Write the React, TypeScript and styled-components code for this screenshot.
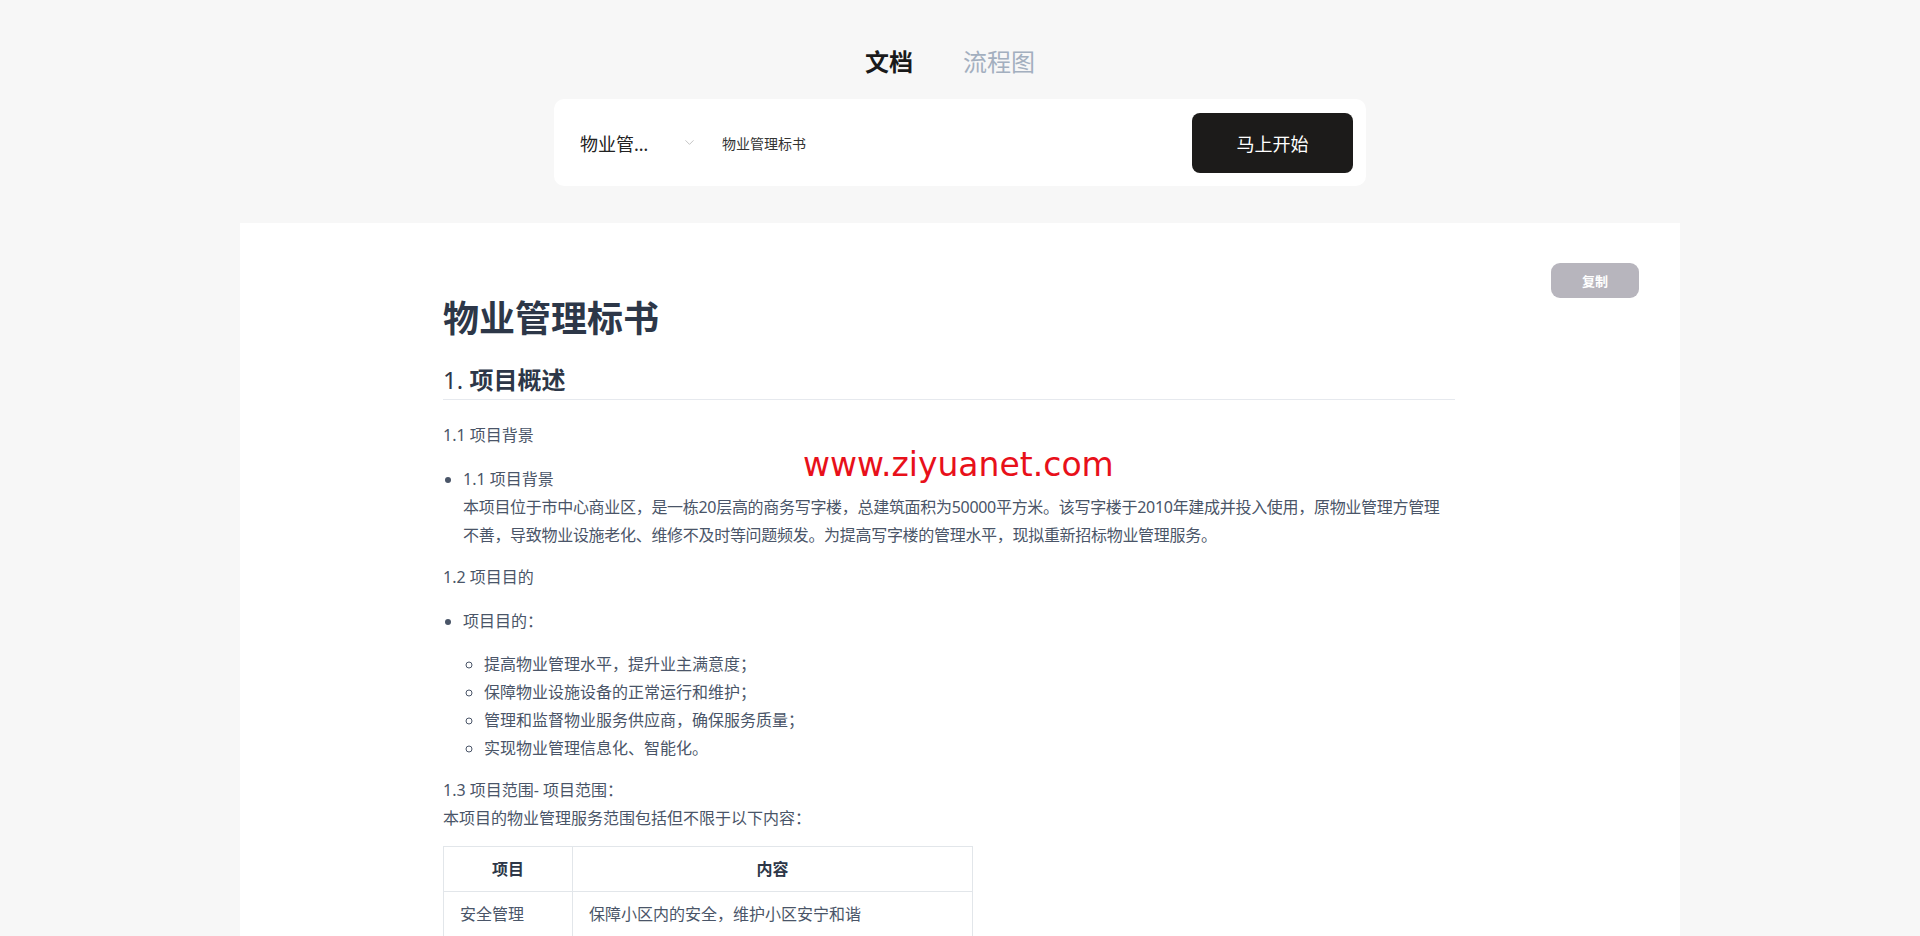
import React from "react"
import styled, { createGlobalStyle } from "styled-components"
import { ChevronDown } from "lucide-react"

const GlobalStyle = createGlobalStyle`
  html, body {
    margin: 0;
    padding: 0;
    background: #f7f7f7;
    font-family: "Noto Sans", "Noto Sans CJK SC", sans-serif;
  }
  * { box-sizing: border-box; }
`

const Page = styled("div")`
  min-height: 100vh;
  display: flex;
  flex-direction: column;
  align-items: center;
`

const Tabs = styled("nav")`
  display: flex;
  gap: 50px;
  padding: 46px 20px 0 0;
  margin-bottom: 21px;
`

const Tab = styled("span")<{ $active?: boolean }>`
  font-size: 24px;
  line-height: 32px;
  font-weight: ${(p) => (p.$active ? 700 : 400)};
  color: ${(p) => (p.$active ? "#1a1a1a" : "#a3afbf")};
  cursor: pointer;
`

const SearchCard = styled("div")`
  width: 812px;
  height: 87px;
  background: #fff;
  border-radius: 10px;
  display: flex;
  align-items: center;
  padding: 0 13px 0 26px;
`

const Select = styled("div")`
  display: flex;
  align-items: center;
  gap: 22px;
  width: 140px;
  color: #222;
`

const SelectValue = styled("span")`
  width: 80px;
  font-size: 18px;
  white-space: nowrap;
  overflow: hidden;
  text-overflow: ellipsis;
`

const TopicInput = styled("input")`
  flex: 1;
  border: none;
  outline: none;
  font-family: inherit;
  font-size: 14px;
  color: #333;
  background: transparent;
`

const StartButton = styled("button")`
  width: 161px;
  height: 60px;
  border: none;
  border-radius: 8px;
  background: #1c1b1a;
  color: #fff;
  font-family: inherit;
  font-size: 18px;
  cursor: pointer;
`

const Panel = styled("main")`
  position: relative;
  width: 1440px;
  flex: 1;
  margin-top: 37px;
  background: #fff;
  padding: 73px 225px 60px 203px;
  color: #4a5568;
  font-size: 16px;
  line-height: 28px;
`

const CopyButton = styled("button")`
  position: absolute;
  top: 40px;
  right: 41px;
  width: 88px;
  height: 35px;
  border: none;
  border-radius: 9px;
  background: #b7b5bd;
  color: #fff;
  font-family: inherit;
  font-size: 13px;
  font-weight: 600;
`

const Watermark = styled("div")`
  position: absolute;
  left: 563px;
  top: 222px;
  font-family: "DejaVu Sans", sans-serif;
  font-size: 33px;
  line-height: 40px;
  color: #e8101a;
  pointer-events: none;
`

const Title = styled("h1")`
  margin: 0 0 24px;
  font-size: 36px;
  line-height: 45px;
  font-weight: 700;
  color: #2d3748;
`

const SectionTitle = styled("h2")`
  margin: 0 0 21px;
  padding-bottom: 4px;
  font-size: 24px;
  line-height: 30px;
  font-weight: 700;
  color: #2d3748;
  border-bottom: 1px solid #e6e9ee;
`

const SectionNumber = styled("span")`
  font-weight: 400;
`

const Para = styled("p")`
  margin: 14px 0;
`

const List = styled("ul")<{ $nested?: boolean }>`
  margin: ${(p) => (p.$nested ? "15px 0 14px" : "16px 0 14px")};
  padding-left: ${(p) => (p.$nested ? "21px" : "20px")};
  list-style: ${(p) => (p.$nested ? "circle" : "disc")};
  li > p {
    margin: 0;
  }
`

const BodyText = styled("span")`
  letter-spacing: -0.3px;
`

const Table = styled("table")`
  border-collapse: collapse;
  margin: 0 0 16px;
  width: 530px;
  th, td {
    border: 1px solid #e2e6ea;
    padding: 8px 16px;
  }
  th {
    color: #2d3748;
    font-weight: 700;
    text-align: center;
  }
  th:first-child {
    width: 129px;
  }
`

const rows = [
  ["安全管理", "保障小区内的安全，维护小区安宁和谐"],
  ["环境管理", "保持小区内环境整洁，绿化养护"],
  ["设备管理", "负责设施设备的日常维护与保养"],
  ["客户服务", "处理业主投诉，提供便民服务"],
]

const goals = [
  "提高物业管理水平，提升业主满意度；",
  "保障物业设施设备的正常运行和维护；",
  "管理和监督物业服务供应商，确保服务质量；",
  "实现物业管理信息化、智能化。",
]

export default function App() {
  return (
    <Page>
      <GlobalStyle />
      <Tabs>
        <Tab $active>文档</Tab>
        <Tab>流程图</Tab>
      </Tabs>
      <SearchCard>
        <Select>
          <SelectValue>物业管理标书</SelectValue>
          <ChevronDown size={15} color="#b4b4b4" strokeWidth={1.25} />
        </Select>
        <TopicInput defaultValue="物业管理标书" />
        <StartButton>马上开始</StartButton>
      </SearchCard>
      <Panel>
        <CopyButton>复制</CopyButton>
        <Watermark>www.ziyuanet.com</Watermark>
        <Title>物业管理标书</Title>
        <SectionTitle>
          <SectionNumber>1. </SectionNumber>项目概述
        </SectionTitle>
        <Para>1.1 项目背景</Para>
        <List>
          <li>
            1.1 项目背景
            <br />
            <BodyText>
              本项目位于市中心商业区，是一栋20层高的商务写字楼，总建筑面积为50000平方米。该写字楼于2010年建成并投入使用，原物业管理方管理不善，导致物业设施老化、维修不及时等问题频发。为提高写字楼的管理水平，现拟重新招标物业管理服务。
            </BodyText>
          </li>
        </List>
        <Para>1.2 项目目的</Para>
        <List>
          <li>
            <p>项目目的：</p>
            <List $nested>
              {goals.map((g) => (
                <li key={g}>{g}</li>
              ))}
            </List>
          </li>
        </List>
        <Para>
          1.3 项目范围- 项目范围：
          <br />
          本项目的物业管理服务范围包括但不限于以下内容：
        </Para>
        <Table>
          <thead>
            <tr>
              <th>项目</th>
              <th>内容</th>
            </tr>
          </thead>
          <tbody>
            {rows.map(([k, v]) => (
              <tr key={k}>
                <td>{k}</td>
                <td>{v}</td>
              </tr>
            ))}
          </tbody>
        </Table>
      </Panel>
    </Page>
  )
}
